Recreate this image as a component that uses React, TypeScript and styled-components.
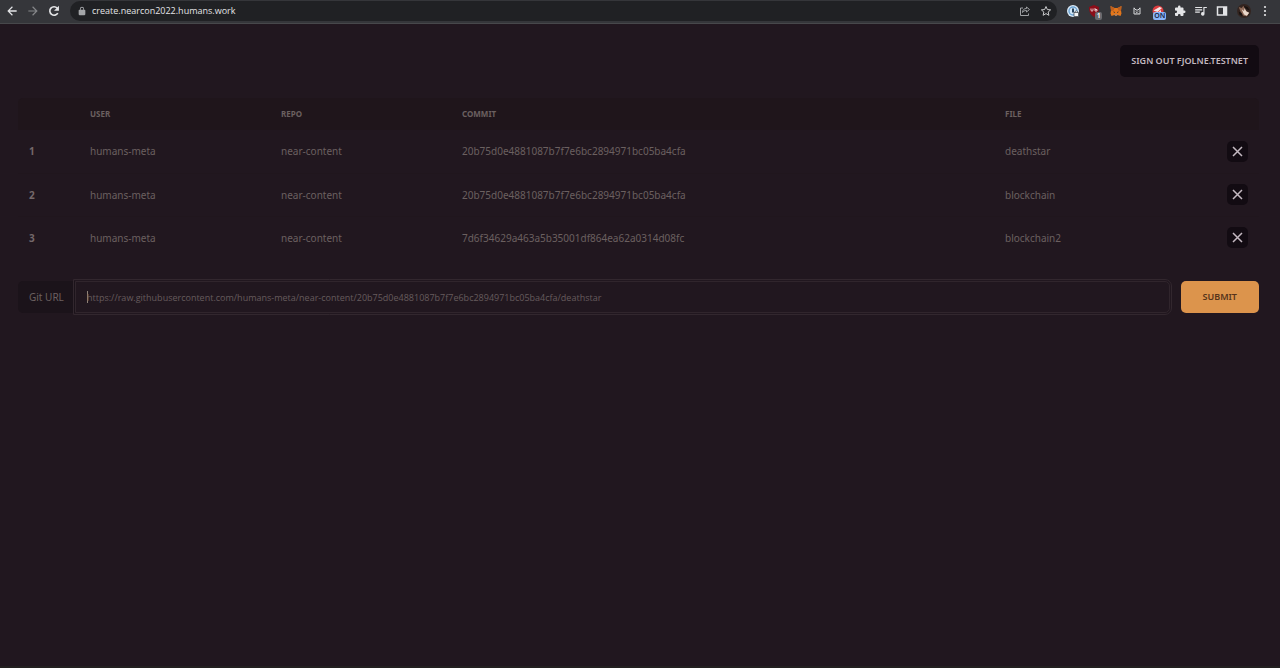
import React from "react";
import styled, { createGlobalStyle } from "styled-components";

const GlobalStyle = createGlobalStyle`
  * { box-sizing: border-box; }
  html, body, #root { height: 100%; }
  body {
    margin: 0;
    background: #21171f;
    color: #6b6060;
    font-family: "Noto Sans", "Open Sans", sans-serif;
    font-size: 10px;
    line-height: 16px;
  }
  button { font-family: inherit; }
  input { font-family: "Open Sans", "Noto Sans", sans-serif; }
`;

const Window = styled.div`
  display: flex;
  flex-direction: column;
  min-height: 100%;
`;

const Toolbar = styled.header`
  display: flex;
  align-items: center;
  height: 24px;
  padding: 0 7px 2px 4px;
  gap: 5px;
  background: #35363a;
  border-bottom: 1px solid #47484b;
`;

const ToolButton = styled.button<{ $dim?: boolean }>`
  display: flex;
  flex: none;
  align-items: center;
  justify-content: center;
  width: 16px;
  height: 16px;
  padding: 0;
  border: 0;
  background: none;
  color: ${(p) => (p.$dim ? "#86878a" : "#e4e5e7")};
`;

const AddressBar = styled.div`
  display: flex;
  flex: 1;
  align-items: center;
  gap: 5px;
  height: 20px;
  margin: 0 3px;
  padding: 0 3px 0 7px;
  border-radius: 10px;
  background: #202124;
  color: #a4a6a9;
`;

const AddressInput = styled.input`
  flex: 1;
  min-width: 0;
  padding: 0;
  border: 0;
  outline: 0;
  background: none;
  color: #e3e4e6;
  font-size: 9px;
  line-height: 16px;
`;

const Extensions = styled.div`
  display: flex;
  align-items: center;
  justify-content: space-between;
  width: 208px;
`;

const Badged = styled.span`
  position: relative;
  display: flex;
`;

const Badge = styled.span<{ $on?: boolean }>`
  position: absolute;
  right: -2px;
  bottom: -3px;
  min-width: 7px;
  padding: 0 1px;
  border-radius: 2px;
  background: ${(p) => (p.$on ? "#8ab4f8" : "#686a6e")};
  color: ${(p) => (p.$on ? "#16233c" : "#ffffff")};
  font-size: 7px;
  font-weight: 600;
  line-height: 8px;
  text-align: center;
`;

const Page = styled.main`
  display: flex;
  flex: 1;
  flex-direction: column;
  padding: 21px 21px 21px 18px;
  border-bottom: 2px solid #232020;
`;

const Account = styled.div`
  display: flex;
  justify-content: flex-end;
  margin-bottom: 21px;
`;

const Button = styled.button<{ $primary?: boolean }>`
  flex: none;
  height: 32px;
  padding: 0 ${(p) => (p.$primary ? 22 : 11)}px;
  border: 0;
  border-radius: 5px;
  background: ${(p) => (p.$primary ? "#dc944c" : "#120b12")};
  color: ${(p) => (p.$primary ? "#55331a" : "#c4b9c1")};
  font-size: 9px;
  font-weight: 600;
  line-height: 16px;
  text-transform: uppercase;
`;

const FileTable = styled.table`
  width: 100%;
  table-layout: fixed;
  border-collapse: collapse;
  text-align: left;
`;

const Column = styled.col<{ $width?: number }>`
  width: ${(p) => (p.$width ? `${p.$width}px` : "auto")};
`;

const HeadCell = styled.th`
  height: 32px;
  padding: 0 11px;
  background: #1f151b;
  font-size: 8px;
  font-weight: 700;
  text-transform: uppercase;

  &:first-child { border-radius: 5px 0 0 0; }
  &:last-child { border-radius: 0 5px 0 0; }
`;

const Row = styled.tr`
  & + & { border-top: 1px solid #20161d; }
`;

const IndexCell = styled.th`
  height: 43px;
  padding: 0 11px;
  font-weight: 700;
  color: #74686a;
`;

const Cell = styled.td`
  padding: 0 11px;
`;

const RemoveButton = styled.button`
  display: flex;
  align-items: center;
  justify-content: center;
  width: 21px;
  height: 21px;
  padding: 0;
  border: 0;
  border-radius: 5px;
  background: #120b12;
  color: #c4b9c1;
`;

const UrlForm = styled.form`
  display: flex;
  align-items: center;
  gap: 11px;
  margin-top: 22px;
`;

const UrlGroup = styled.div`
  display: flex;
  flex: 1;
  min-width: 0;
`;

const UrlLabel = styled.label`
  display: flex;
  flex: none;
  align-items: center;
  width: 57px;
  padding: 0 11px;
  border-radius: 5px 0 0 5px;
  background: #1b131a;
`;

const UrlInput = styled.input`
  flex: 1;
  min-width: 0;
  height: 32px;
  padding: 0 11px;
  border: 1px solid #30252c;
  border-radius: 0 5px 5px 0;
  outline: 1px solid #32272e;
  outline-offset: 1px;
  background: #21171f linear-gradient(#8f8378, #8f8378) 11px 50% / 1px 12px no-repeat;
  color: #a89c98;
  caret-color: transparent;
  font-size: 9px;
  line-height: 16px;

  &::placeholder { color: #665b5d; opacity: 1; }
`;

const files = [
  { commit: "20b75d0e4881087b7f7e6bc2894971bc05ba4cfa", file: "deathstar" },
  { commit: "20b75d0e4881087b7f7e6bc2894971bc05ba4cfa", file: "blockchain" },
  { commit: "7d6f34629a463a5b35001df864ea62a0314d08fc", file: "blockchain2" },
];

type GlyphProps = { size?: number; box?: number; children: React.ReactNode };

const Glyph = ({ size = 12, box = 24, children }: GlyphProps) => (
  <svg width={size} height={size} viewBox={`0 0 ${box} ${box}`} fill="none" aria-hidden="true">
    {children}
  </svg>
);

const Solid = ({ d, size }: { d: string; size?: number }) => (
  <Glyph size={size}>
    <path d={d} fill="currentColor" />
  </Glyph>
);

const BrowserBar = () => (
  <Toolbar>
    <ToolButton aria-label="Back">
      <Solid size={14} d="M20 10.700H8.200l5.200-5.200L12 4l-8 8 8 8 1.400-1.500-5.200-5.200H20z" />
    </ToolButton>
    <ToolButton aria-label="Forward" $dim>
      <Solid size={14} d="M12 4l-1.400 1.400 5.600 5.600H4v2h12.200l-5.600 5.600L12 20l8-8z" />
    </ToolButton>
    <ToolButton aria-label="Reload">
      <Glyph size={14}>
        <path d="M18.500 15.500A7.300 7.300 0 1 1 17.500 7" stroke="currentColor" strokeWidth="2.800" />
        <path d="M20.500 3v8.500H12z" fill="currentColor" />
      </Glyph>
    </ToolButton>
    <AddressBar>
      <Solid
        size={10}
        d="M18 9h-1V7A5 5 0 0 0 7 7v2H6a2 2 0 0 0-2 2v9a2 2 0 0 0 2 2h12a2 2 0 0 0 2-2v-9a2 2 0 0 0-2-2zM9 7a3 3 0 0 1 6 0v2H9z"
      />
      <AddressInput aria-label="Address" defaultValue="create.nearcon2022.humans.work" />
      <ToolButton aria-label="Share">
        <Glyph>
          <path
            d="M8 6H3v15h16v-4M15 4l6 5-6 5v-3c-4 0-6 1-8 4 0-5 3-8 8-8z"
            stroke="#9fa1a4"
            strokeWidth="2"
            strokeLinejoin="round"
          />
        </Glyph>
      </ToolButton>
      <ToolButton aria-label="Bookmark">
        <Glyph>
          <path
            d="M12 3l2.700 6.100 6.600.6-5 4.400 1.500 6.500L12 17.200l-5.800 3.400 1.500-6.500-5-4.400 6.600-.6z"
            stroke="#c9cacc"
            strokeWidth="2"
            strokeLinejoin="round"
          />
        </Glyph>
      </ToolButton>
    </AddressBar>
    <Extensions>
      <ToolButton aria-label="Password manager">
        <Glyph>
          <circle cx="12" cy="12" r="12" fill="#dcebf8" />
          <circle cx="12" cy="12" r="8" fill="#d3e7f7" stroke="#6fa5d3" strokeWidth="3" />
          <path d="M10 7h4v8h-4z" fill="#27435d" />
          <path d="M14 15h9v8h-9zM16 15v-2q2.500-3 5 0v2" fill="#f5f6f7" stroke="#434950" strokeWidth="1.500" />
        </Glyph>
      </ToolButton>
      <ToolButton aria-label="Ad blocker">
        <Badged>
          <Glyph>
            <path d="M12 0l10 4c0 9-2 15-10 20C4 19 2 13 2 4z" fill="#8b0e19" />
            <path d="M6 7v4q2 3 4 0V7M14 6v6h4V9h-4" stroke="#efd9db" strokeWidth="1.800" />
          </Glyph>
          <Badge>1</Badge>
        </Badged>
      </ToolButton>
      <ToolButton aria-label="Wallet">
        <Glyph>
          <path d="M1 2l8 4h6l8-4-1 9 1 6-2 5-6-2-2 2h-2l-2-2-6 2-2-5 1-6z" fill="#e2761b" />
          <path d="M1 2l8 4-2 5-5 1zM23 2l-8 4 2 5 5 1z" fill="#bd5f1f" />
          <path d="M6 13l4 1-1 2zM18 13l-4 1 1 2z" fill="#2b2d33" />
          <path d="M9 18h6l-1 3h-4z" fill="#a5826a" />
        </Glyph>
      </ToolButton>
      <ToolButton aria-label="Near extension">
        <Glyph size={8}>
          <path
            d="M3 2v19h18V2M3 3l6 6h6l6-6M8 13h2M14 13h2M8 20l4-4 4 4"
            stroke="#d5d6d8"
            strokeWidth="3"
          />
        </Glyph>
      </ToolButton>
      <ToolButton aria-label="Proxy">
        <Badged>
          <Glyph>
            <circle cx="12" cy="12" r="11" fill="#dc3d3f" />
            <path d="M3 11l12-7 5 2-9 8zM9 17l9-7v5z" fill="#f5e6e4" />
          </Glyph>
          <Badge $on>ON</Badge>
        </Badged>
      </ToolButton>
      <ToolButton aria-label="Extensions">
        <Solid d="M20.500 11H19V7a2 2 0 0 0-2-2h-4V3.500a2.500 2.500 0 0 0-5 0V5H4a2 2 0 0 0-2 2v3.800h1.500a2.700 2.700 0 0 1 0 5.400H2V20a2 2 0 0 0 2 2h3.800v-1.500a2.700 2.700 0 0 1 5.400 0V22H17a2 2 0 0 0 2-2v-4h1.500a2.500 2.500 0 0 0 0-5z" />
      </ToolButton>
      <ToolButton aria-label="Media controls">
        <Solid size={14} d="M2 5h12v2H2zM2 9h12v2H2zM2 13h8v2H2zM16 5h6v2h-4v10a3 3 0 1 1-2-2.800z" />
      </ToolButton>
      <ToolButton aria-label="Side panel">
        <Glyph>
          <path d="M3 4h18v16H3z" stroke="currentColor" strokeWidth="3" />
          <path d="M14 4h7v16h-7z" fill="currentColor" />
        </Glyph>
      </ToolButton>
      <ToolButton aria-label="Profile">
        <Glyph size={14}>
          <circle cx="12" cy="12" r="12" fill="#33241f" />
          <path d="M3 5l5 2 3-4 3 7 6 5-3 6-6-1-5-7z" fill="#8a6654" />
          <path d="M8 9l4 3 1-5 3 6 5 2-4 5-5-2z" fill="#ead8cb" />
          <path d="M11 3l7 2 4 6-5-2zM3 13l5 3 1 5-5-3z" fill="#17110f" />
        </Glyph>
      </ToolButton>
      <ToolButton aria-label="Menu">
        <Glyph>
          <circle cx="12" cy="4" r="2.200" fill="currentColor" />
          <circle cx="12" cy="12" r="2.200" fill="currentColor" />
          <circle cx="12" cy="20" r="2.200" fill="currentColor" />
        </Glyph>
      </ToolButton>
    </Extensions>
  </Toolbar>
);

export default function App() {
  return (
    <Window>
      <GlobalStyle />
      <BrowserBar />
      <Page>
        <Account>
          <Button type="button">Sign out fjolne.testnet</Button>
        </Account>
        <FileTable>
          <colgroup>
            <Column $width={61} />
            <Column $width={191} />
            <Column $width={181} />
            <Column />
            <Column $width={222} />
            <Column $width={43} />
          </colgroup>
          <thead>
            <tr>
              <HeadCell />
              <HeadCell scope="col">User</HeadCell>
              <HeadCell scope="col">Repo</HeadCell>
              <HeadCell scope="col">Commit</HeadCell>
              <HeadCell scope="col">File</HeadCell>
              <HeadCell />
            </tr>
          </thead>
          <tbody>
            {files.map(({ commit, file }, i) => (
              <Row key={file}>
                <IndexCell scope="row">{i + 1}</IndexCell>
                <Cell>humans-meta</Cell>
                <Cell>near-content</Cell>
                <Cell>{commit}</Cell>
                <Cell>{file}</Cell>
                <Cell>
                  <RemoveButton type="button" aria-label={`Remove ${file}`}>
                    <Glyph size={11} box={11}>
                      <path d="M1 1l9 9M10 1l-9 9" stroke="currentColor" strokeWidth="1.500" />
                    </Glyph>
                  </RemoveButton>
                </Cell>
              </Row>
            ))}
          </tbody>
        </FileTable>
        <UrlForm onSubmit={(e) => e.preventDefault()}>
          <UrlGroup>
            <UrlLabel htmlFor="git-url">Git URL</UrlLabel>
            <UrlInput
              id="git-url"
              autoFocus
              placeholder="https://raw.githubusercontent.com/humans-meta/near-content/20b75d0e4881087b7f7e6bc2894971bc05ba4cfa/deathstar"
            />
          </UrlGroup>
          <Button $primary type="submit">
            Submit
          </Button>
        </UrlForm>
      </Page>
    </Window>
  );
}
